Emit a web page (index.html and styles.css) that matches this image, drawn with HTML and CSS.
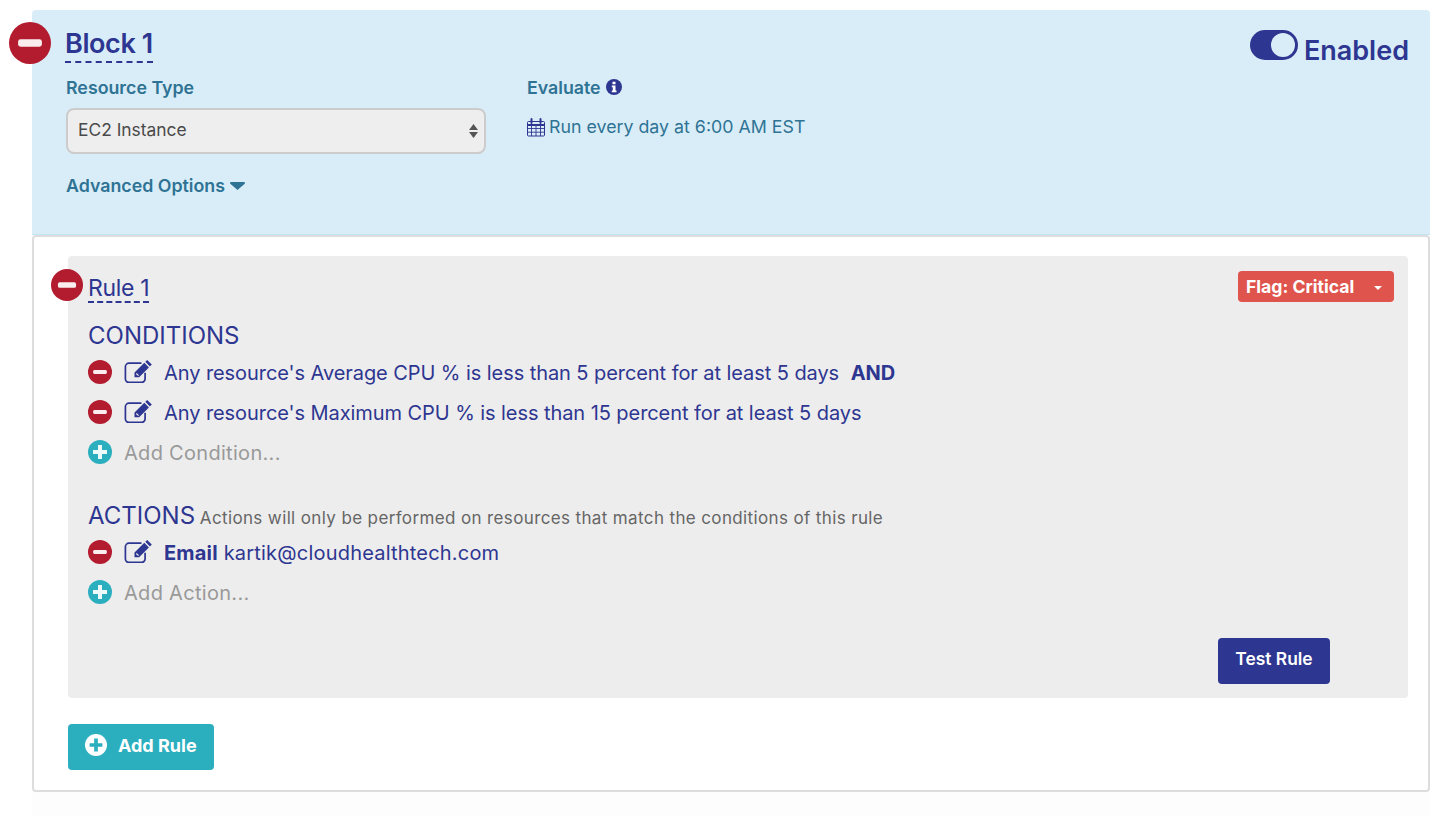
FILE: index.html
```html
<!DOCTYPE html>
<html lang="en">
<head>
<meta charset="utf-8">
<title>Block 1</title>
<link rel="stylesheet" href="styles.css">
</head>
<body>
<svg class="defs" width="0" height="0" aria-hidden="true">
  <symbol id="minus" viewBox="0 0 24 24"><circle cx="12" cy="12" r="12" fill="#b31b2e"/><rect x="5.200" y="9.900" width="13.600" height="4.200" rx="1.400" fill="#fff" fill-opacity=".92"/></symbol>
  <symbol id="plus" viewBox="0 0 24 24"><circle cx="12" cy="12" r="12" fill="#2bafbf"/><path d="M10 5h4v5h5v4h-5v5h-4v-5H5v-4h5z" fill="#fff" fill-opacity=".92"/></symbol>
  <symbol id="edit" viewBox="0 0 29 24"><path d="M17.500 4.200H5a3.600 3.600 0 0 0-3.600 3.600v12A3.600 3.600 0 0 0 5 23.400h12.500a3.600 3.600 0 0 0 3.600-3.600v-6" fill="none" stroke="#2d3691" stroke-width="1.700"/><path d="M23.200.9l4.600 4.600-1.900 1.900-4.600-4.600zM20.300 3.800l4.600 4.600-9.800 9.800H10.500v-4.600z" fill="#2d3691"/><path d="M12.300 14.500l2.200 2.200" stroke="#ededed" stroke-width="1.200"/></symbol>
</svg>
<main class="block">
  <section class="head">
    <svg class="remove-block"><use href="#minus"/></svg>
    <div class="toggle-row">
      <span class="toggle"><span class="knob"></span></span>
      <span class="enabled">Enabled</span>
    </div>
    <h1 class="block-title">Block 1</h1>
    <div class="fields">
      <div class="field-type">
        <div class="label">Resource Type</div>
        <div class="select">
          <span>EC2 Instance</span>
          <svg class="updown" width="9" height="16" viewBox="0 0 9 16"><path d="M4.500 1L9 7H0zM0 9h9l-4.500 6z" fill="#555"/></svg>
        </div>
        <div class="label advanced">Advanced Options
          <svg class="caret" width="15" height="8" viewBox="0 0 15 8"><path d="M1 0h13a1 1 0 0 1 .700 1.700L7.500 8 .300 1.700A1 1 0 0 1 1 0z" fill="#2f7394"/></svg>
        </div>
      </div>
      <div class="field-eval">
        <div class="label">Evaluate
          <svg class="info" width="16" height="16" viewBox="0 0 16 16"><circle cx="8" cy="8" r="8" fill="#2d3691"/><path d="M6.500 2.800h3v2.400h-3zM5.800 6.400h3.700v5h1v1.800H5.800v-1.800h1v-3.200h-1z" fill="#fff"/></svg>
        </div>
        <div class="schedule">
          <svg class="calendar" width="18" height="19" viewBox="0 0 18 19"><path d="M1.500 3.500h15a1 1 0 0 1 1 1V17a1 1 0 0 1-1 1h-15a1 1 0 0 1-1-1V4.500a1 1 0 0 1 1-1z" fill="#d9edf8" stroke="#2d3691"/><path d="M.500 7h17" stroke="#2d3691" stroke-width="2"/><path d="M4.500 7v11M9 7v11M13.500 7v11M.500 10.500h17M.500 14.200h17" stroke="#2d3691" stroke-width=".900"/><path d="M4.500 1v4M13.500 1v4" stroke="#2d3691" stroke-width="2" stroke-linecap="round"/></svg>
          <span>Run every day at 6:00 AM EST</span>
        </div>
      </div>
    </div>
  </section>
  <section class="body">
    <div class="rule">
      <svg class="remove-rule"><use href="#minus"/></svg>
      <div class="rule-top">
        <h2 class="rule-title">Rule 1</h2>
        <div class="flag"><span>Flag: Critical</span><i class="flag-caret"></i></div>
      </div>
      <h3 class="section-title conditions">CONDITIONS</h3>
      <div class="row">
        <svg class="ic"><use href="#minus"/></svg>
        <svg class="ed"><use href="#edit"/></svg>
        <span>Any resource's Average CPU % is less than 5 percent for at least 5 days <b class="and">AND</b></span>
      </div>
      <div class="row">
        <svg class="ic"><use href="#minus"/></svg>
        <svg class="ed"><use href="#edit"/></svg>
        <span>Any resource's Maximum CPU % is less than 15 percent for at least 5 days</span>
      </div>
      <div class="row add">
        <svg class="ic"><use href="#plus"/></svg>
        <span>Add Condition...</span>
      </div>
      <h3 class="section-title actions">ACTIONS <small>Actions will only be performed on resources that match the conditions of this rule</small></h3>
      <div class="row">
        <svg class="ic"><use href="#minus"/></svg>
        <svg class="ed"><use href="#edit"/></svg>
        <span class="email"><b>Email</b> kartik@cloudhealthtech.com</span>
      </div>
      <div class="row add">
        <svg class="ic"><use href="#plus"/></svg>
        <span>Add Action...</span>
      </div>
      <div class="test-wrap"><button class="btn test">Test Rule</button></div>
    </div>
    <button class="btn add-rule">
      <svg class="btn-plus" width="22" height="22" viewBox="0 0 24 24"><circle cx="12" cy="12" r="12" fill="#fff"/><path d="M10 5h4v5h5v4h-5v5h-4v-5H5v-4h5z" fill="#2bafbf"/></svg>
      Add Rule
    </button>
  </section>
  <div class="below"></div>
</main>
</body>
</html>
```
FILE: styles.css
```css
* { box-sizing: border-box; }
html, body { margin: 0; height: 816px; overflow: hidden; }
body {
  background: #fff;
  padding: 10px 18px 0 32px;
  font-family: Inter, "Noto Sans", sans-serif;
  color: #2d3691;
}
.defs { position: absolute; }
.block { width: 1398px; }

.head {
  position: relative;
  height: 225px;
  padding: 16px 21px 0 33px;
  background: #d9edf8;
  border-bottom: 1px solid #bfe6f0;
  border-radius: 4px 4px 0 0;
}
.remove-block { position: absolute; left: -23px; top: 12px; width: 42px; height: 42px; }
.toggle-row { float: right; display: flex; align-items: center; gap: 6px; margin-top: 5px; }
.toggle { display: flex; justify-content: flex-end; align-items: center; width: 48px; height: 30px; margin-top: -10px; padding-right: 3px; background: #2d3691; border-radius: 15px; }
.knob { width: 24px; height: 24px; border-radius: 50%; background: #d9edf8; }
.enabled { padding-top: 2px; font-size: 27px; line-height: 36px; font-weight: 600; }
.block-title { display: inline-block; margin: 0; font-size: 27px; line-height: 35px; font-weight: 600; border-bottom: 2px dashed #2d3691; letter-spacing: -.4px; }
.fields { display: flex; margin-top: 13px; }
.field-type { width: 462px; padding-left: 1px; }
.label { font-size: 17.800px; line-height: 24px; font-weight: 600; color: #2f7394; }
.select {
  display: flex; align-items: center; justify-content: space-between;
  width: 420px; height: 46px; margin-top: 8px; padding: 0 6px 4px 10px;
  background: #eee; border: 2px solid #ccc; border-radius: 8px;
  font-size: 17.400px; color: #4a4a4a;
}
.updown { margin-top: 4px; }
.advanced { margin-top: 20px; }
.caret { margin-left: 1px; vertical-align: 2px; }
.info { vertical-align: -1px; margin-left: 1px; }
.schedule { display: flex; align-items: center; gap: 4px; margin-top: 15px; font-size: 17.800px; line-height: 24px; color: #2f7394; }

.body {
  height: 557px;
  padding: 19px 20px 0 34px;
  border: 2px solid #ddd;
  border-radius: 4px;
  background: #fff;
}
.rule {
  position: relative;
  height: 442px;
  padding: 15px 14px 0 20px;
  background: #ededed;
  border-radius: 4px;
}
.remove-rule { position: absolute; left: -17px; top: 13px; width: 32px; height: 32px; }
.rule-top { display: flex; justify-content: space-between; align-items: flex-start; height: 49px; }
.rule-title { margin: 0; padding-top: 4px; font-size: 23px; line-height: 26px; font-weight: 400; border-bottom: 2px dashed #2d3691; letter-spacing: -.3px; }
.flag {
  display: flex; align-items: center; justify-content: space-between;
  width: 156px; height: 31px; padding: 0 12px 0 8px;
  background: #df544c; color: #fff; border-radius: 4px;
  font-size: 17.600px; font-weight: 700;
}
.flag-caret { width: 0; height: 0; border: 4px solid transparent; border-top-color: #fff; border-bottom: 0; margin-top: 2px; }
.section-title { margin: 0; font-size: 24px; line-height: 32px; font-weight: 400; }
.conditions { height: 32px; }
.actions { height: 24px; margin-top: 32px; line-height: 24px; }
.actions small { margin-left: -2px; font-size: 17px; letter-spacing: .37px; color: #666; }
.row { display: flex; align-items: center; height: 40px; font-size: 20px; letter-spacing: -.07px; }
.row span { padding-top: 2px; }
.actions + .row { margin-top: 4px; }
.ic { width: 24px; height: 24px; margin-right: 12px; flex: none; }
.ed { width: 29px; height: 24px; margin: -3px 11px 0 0; flex: none; }
.add { color: #999; letter-spacing: .3px; }
.and { margin-left: 6px; font-weight: 700; }
.row b { font-weight: 700; }
.email { letter-spacing: .2px; }
.test-wrap { display: flex; justify-content: flex-end; margin-top: 26px; padding-right: 64px; }
.btn { display: inline-flex; align-items: center; border: 0; border-radius: 4px; color: #fff; font-family: inherit; font-size: 17.400px; font-weight: 600; padding: 0 0 5px; }
.test { justify-content: center; width: 112px; height: 46px; background: #2d3691; }
.add-rule { gap: 11px; width: 146px; height: 46px; margin-top: 26px; padding: 0 0 4px 17px; background: #2bafbf; font-size: 18px; font-weight: 700; }
.below { height: 30px; width: 100%; background: #fdfdfd; }
```
